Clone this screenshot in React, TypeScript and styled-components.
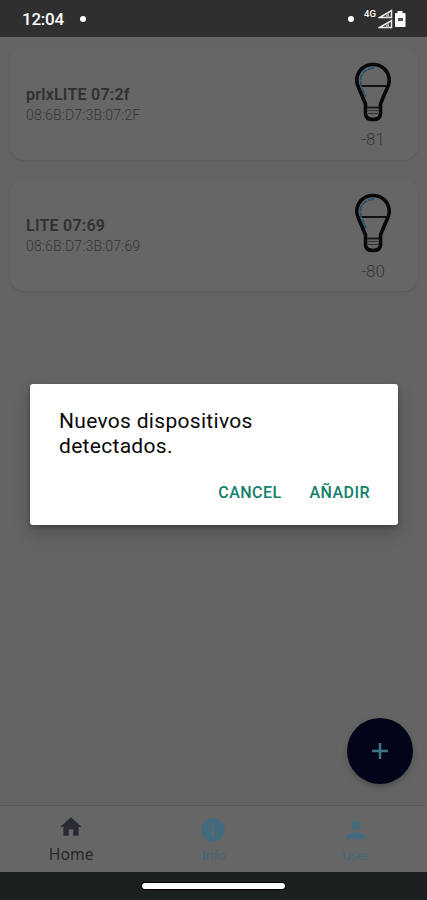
import React from "react";
import styled, { createGlobalStyle } from "styled-components";

const GlobalStyle = createGlobalStyle`
  * { box-sizing: border-box; }
  body { margin: 0; background: #646464; font-family: Roboto, sans-serif; }
  button { font-family: inherit; border: 0; background: none; padding: 0; }
`;

const Screen = styled.div`
  width: 427px;
  height: 900px;
  display: flex;
  flex-direction: column;
  overflow: hidden;
  position: relative;
  background: #646464;
`;

const StatusBar = styled.header`
  height: 37px;
  flex: none;
  display: flex;
  align-items: center;
  padding: 1px 20px 0 22px;
  background: #2f2f2f;
  color: #fff;
`;

const Clock = styled.time`
  width: 58px;
  font-size: 17px;
  font-weight: 500;
  line-height: 20px;
  letter-spacing: -0.25px;
`;

const Dot = styled.span`
  width: 6px;
  height: 6px;
  border-radius: 50%;
  background: #fff;
`;

const StatusIcons = styled.div`
  margin-left: auto;
  display: flex;
  align-items: center;
`;

const Network = styled.span`
  align-self: flex-start;
  margin: 0 2px 0 10px;
  width: 12px;
  font-size: 9.5px;
  font-weight: 500;
  line-height: 10px;
`;

const DeviceList = styled.main`
  flex: 1;
  display: flex;
  flex-direction: column;
  gap: 19px;
  padding: 10px 9px 0 10px;
`;

const DeviceCard = styled.article`
  height: 112.5px;
  display: flex;
  justify-content: space-between;
  border-radius: 14px;
  padding: 0 16px;
  background: #666;
  box-shadow: 0 1px 2px rgba(0, 0, 0, 0.11);
`;

const DeviceText = styled.div`
  padding-top: 36.5px;
`;

const DeviceName = styled.h2`
  margin: 0;
  font-size: 16px;
  font-weight: 600;
  line-height: 21px;
  letter-spacing: 0.24px;
  color: #303030;
`;

const Address = styled.div`
  font-size: 14px;
  font-weight: 300;
  line-height: 20px;
  letter-spacing: 0.2px;
  color: #353535;
`;

const Signal = styled.div`
  width: 58px;
  display: flex;
  flex-direction: column;
  align-items: center;
  padding-top: 14.5px;
  font-size: 17px;
  line-height: 20px;
  color: #363636;
  font-weight: 300;

  svg { margin-bottom: 7.5px; }
`;

const FabButton = styled.button`
  position: absolute;
  right: 14px;
  bottom: 116px;
  width: 66px;
  height: 66px;
  display: grid;
  place-items: center;
  border-radius: 50%;
  background: #02041a;
  box-shadow: 0 3px 6px rgba(0, 0, 0, 0.22);
`;

const TabBar = styled.nav`
  height: 67px;
  flex: none;
  display: grid;
  grid-template-columns: repeat(3, 1fr);
  border-top: 1px solid #5a5a5a;
  background: #666;
`;

const Tab = styled.div<{ $active?: boolean }>`
  display: flex;
  flex-direction: column;
  align-items: center;
  padding-top: ${(p) => (p.$active ? 8 : 9.5)}px;
  color: ${(p) => (p.$active ? "#26282c" : "#436879")};
  font: 400 ${(p) => (p.$active ? "15.7px" : "12.7px")} / 20px "Noto Sans", sans-serif;

  svg { color: ${(p) => (p.$active ? "#282b34" : "#436a7d")}; flex: none; }
  span { margin-top: ${(p) => (p.$active ? 4 : 1.5)}px; }
`;

const GestureBar = styled.footer`
  height: 28px;
  flex: none;
  display: flex;
  justify-content: center;
  padding-top: 11px;
  background: #1b2121;
`;

const GestureHandle = styled.div`
  width: 143px;
  height: 6px;
  border-radius: 3px;
  background: #fff;
  box-shadow: 0 0 0 1px #000;
`;

const DialogLayer = styled.div`
  position: absolute;
  inset: 0;
  display: flex;
  justify-content: center;
  align-items: flex-start;
  padding: 384px 29px 0 30px;
`;

const Dialog = styled.section`
  width: 100%;
  height: 141px;
  display: flex;
  flex-direction: column;
  justify-content: space-between;
  padding: 25px 28px 22px 29px;
  border-radius: 3px;
  background: #fff;
  box-shadow: 0 8px 18px rgba(0, 0, 0, 0.2), 0 2px 5px rgba(0, 0, 0, 0.25);
`;

const DialogTitle = styled.h1`
  margin: 0;
  max-width: 260px;
  font-size: 21px;
  font-weight: 400;
  line-height: 25px;
  letter-spacing: 0.3px;
  color: #080808;
`;

const DialogActions = styled.div`
  display: flex;
  justify-content: flex-end;
  gap: 28px;
`;

const DialogButton = styled.button`
  font-size: 16px;
  font-weight: 500;
  line-height: 20px;
  letter-spacing: 0.45px;
  color: #128068;
`;

const BulbIcon = () => (
  <svg width="38" height="60" viewBox="0 0 38 60" fill="none">
    <path
      d="M19 2.500C9.500 2.500 2.800 9.500 2.800 18.500C2.800 23 5 27 7 31L11.500 42V52Q12 57.500 19 57.500Q26 57.500 26.500 52V42L31 31C33 27 35.200 23 35.200 18.500C35.200 9.500 28.500 2.500 19 2.500Z"
      stroke="#08080a"
      strokeWidth="3.600"
      strokeLinejoin="round"
    />
    <path d="M4 24H34" stroke="#08080a" strokeWidth="1.800" />
    <path d="M20 6Q9.500 7 6.800 15V24L12 35" stroke="#26536d" strokeWidth="2" strokeDasharray="6 1" />
    <path d="M12 45.500H26" stroke="#151515" strokeWidth="1.800" />
    <path d="M14 48.500H24M14 51.500H24" stroke="#333" strokeWidth="1.200" />
  </svg>
);

const SignalBarsIcon = () => (
  <svg width="15" height="20" viewBox="0 0 15 20" fill="none">
    <path d="M1.500 8.500H13.500V1.500Z" stroke="#eee" strokeWidth="1.500" />
    <path d="M8 8.500H11V4L8 6Z" fill="#aaa" />
    <path d="M1.500 18.500H13.500V11.500Z" stroke="#eee" strokeWidth="1.500" />
    <path d="M8 18.500H11V14L8 16Z" fill="#aaa" />
  </svg>
);

const BatteryIcon = () => (
  <svg width="14" height="18" viewBox="0 0 14 18">
    <path d="M4.500 1H9.500V3H11.500Q12.500 3 12.500 4V16Q12.500 17 11.500 17H3Q2 17 2 16V4Q2 3 3 3H4.500Z" fill="#fff" />
    <path d="M5 8H10V11H5Z" fill="#555" />
  </svg>
);

const HomeIcon = () => (
  <svg width="26" height="26" viewBox="0 0 24 24" fill="currentColor">
    <path d="M10 20v-6h4v6h5v-8h3L12 3 2 12h3v8z" />
  </svg>
);

const InfoIcon = () => (
  <svg width="28" height="28" viewBox="0 0 24 24" fill="currentColor">
    <path d="M12 2C6.480 2 2 6.480 2 12s4.480 10 10 10 10-4.480 10-10S17.520 2 12 2zm1 15h-2v-6h2v6zm0-8h-2V7h2v2z" />
  </svg>
);

const UserIcon = () => (
  <svg width="28" height="28" viewBox="0 0 24 24" fill="currentColor">
    <path d="M12 12c2.210 0 4-1.790 4-4s-1.790-4-4-4-4 1.790-4 4 1.790 4 4 4zm0 2c-2.670 0-8 1.340-8 4v2h16v-2c0-2.660-5.330-4-8-4z" />
  </svg>
);

const PlusIcon = () => (
  <svg width="18" height="18" viewBox="0 0 18 18">
    <path d="M9 1V17M1 9H17" stroke="#3e7480" strokeWidth="2.600" />
  </svg>
);

const devices = [
  { name: "prlxLITE 07:2f", address: "08:6B:D7:3B:07:2F", rssi: -81 },
  { name: "LITE 07:69", address: "08:6B:D7:3B:07:69", rssi: -80 },
];

export default function App() {
  return (
    <>
      <GlobalStyle />
      <Screen>
        <StatusBar>
          <Clock>12:04</Clock>
          <Dot />
          <StatusIcons>
            <Dot />
            <Network>4G</Network>
            <SignalBarsIcon />
            <BatteryIcon />
          </StatusIcons>
        </StatusBar>
        <DeviceList>
          {devices.map((device) => (
            <DeviceCard key={device.address}>
              <DeviceText>
                <DeviceName>{device.name}</DeviceName>
                <Address>{device.address}</Address>
              </DeviceText>
              <Signal>
                <BulbIcon />
                {device.rssi}
              </Signal>
            </DeviceCard>
          ))}
        </DeviceList>
        <TabBar>
          <Tab $active>
            <HomeIcon />
            <span>Home</span>
          </Tab>
          <Tab>
            <InfoIcon />
            <span>Info</span>
          </Tab>
          <Tab>
            <UserIcon />
            <span>User</span>
          </Tab>
        </TabBar>
        <GestureBar>
          <GestureHandle />
        </GestureBar>
        <FabButton aria-label="Add">
          <PlusIcon />
        </FabButton>
        <DialogLayer>
          <Dialog role="dialog">
            <DialogTitle>Nuevos dispositivos detectados.</DialogTitle>
            <DialogActions>
              <DialogButton>CANCEL</DialogButton>
              <DialogButton>AÑADIR</DialogButton>
            </DialogActions>
          </Dialog>
        </DialogLayer>
      </Screen>
    </>
  );
}
